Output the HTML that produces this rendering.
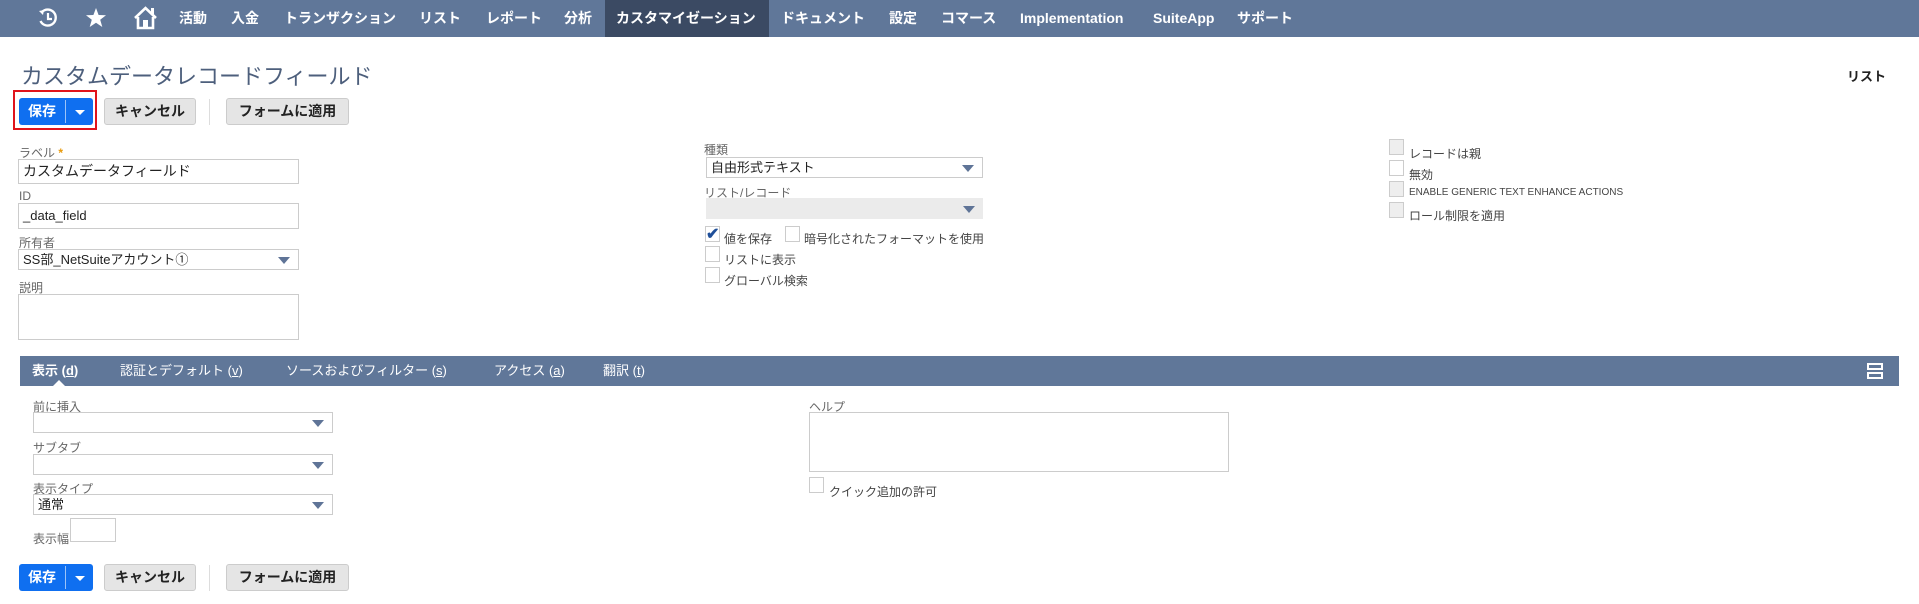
<!DOCTYPE html>
<html><head><meta charset="utf-8"><style>
*{box-sizing:border-box;margin:0;padding:0}
body{width:1919px;height:604px;background:#fff;position:relative;overflow:hidden;font-family:"Liberation Sans","Noto Sans CJK JP",sans-serif;color:#333}
.a{position:absolute;white-space:nowrap}
.nav{left:0;top:0;width:1919px;height:37px;background:#607799}
.ni{top:0;height:37px;line-height:37px;color:#fff;font-weight:bold;font-size:14px}
.lbl{font-size:12px;color:#666}
.inp{border:1px solid #ccc;background:#fff;font-size:13px;color:#222;padding-left:4px}
.arr{position:absolute;right:8px;top:50%;margin-top:-3px;width:0;height:0;border-left:6px solid transparent;border-right:6px solid transparent;border-top:7px solid #5f7497}
.cb{width:15px;height:16px;border:1px solid #ccc;background:#fff}
.cbg{background:#eee}
.btn{height:27px;border:1px solid #ccc;border-radius:3px;background:#e5e5e5;font-size:14px;font-weight:bold;line-height:25px;text-align:center;color:#222}
.save{height:27px;background:#0f6ff0;border-radius:3px;color:#fff;font-size:14px;font-weight:bold;line-height:27px}
.tab{top:356px;height:30px;line-height:30px;color:#fff;font-size:13px}
</style></head><body>
<div class="a nav"></div>
<div class="a" style="left:605px;top:0;width:164px;height:37px;background:#3b4a63"></div>
<svg class="a" style="left:37px;top:7px" width="22" height="22" viewBox="0 0 22 22"><path d="M5 5 A8 8 0 1 1 3.5 14" fill="none" stroke="#fff" stroke-width="2.4"/><path d="M2 4 L7 3 L6 8Z" fill="#fff"/><path d="M11 6 V12 H15" fill="none" stroke="#fff" stroke-width="2.2"/></svg>
<svg class="a" style="left:85px;top:7px" width="22" height="22" viewBox="0 0 22 22"><path d="M11 1 L13.6 8 L21 8.2 L15.2 12.8 L17.3 20 L11 15.8 L4.7 20 L6.8 12.8 L1 8.2 L8.4 8Z" fill="#fff"/></svg>
<svg class="a" style="left:133px;top:6px" width="25" height="24" viewBox="0 0 25 24"><path d="M2 12 L12.5 2 L23 12" fill="none" stroke="#fff" stroke-width="2.6"/><path d="M5 11 V22 H20 V11" fill="none" stroke="#fff" stroke-width="2.6"/><rect x="10" y="14" width="5" height="8" fill="#fff"/><rect x="18" y="2" width="3" height="6" fill="#fff"/></svg>
<div class="a ni" style="left:179px">活動</div>
<div class="a ni" style="left:231px">入金</div>
<div class="a ni" style="left:284px">トランザクション</div>
<div class="a ni" style="left:419px">リスト</div>
<div class="a ni" style="left:486px">レポート</div>
<div class="a ni" style="left:564px">分析</div>
<div class="a ni" style="left:616px">カスタマイゼーション</div>
<div class="a ni" style="left:781px">ドキュメント</div>
<div class="a ni" style="left:889px">設定</div>
<div class="a ni" style="left:941px">コマース</div>
<div class="a ni" style="left:1020px">Implementation</div>
<div class="a ni" style="left:1153px">SuiteApp</div>
<div class="a ni" style="left:1237px">サポート</div>

<div class="a" style="left:21px;top:59px;font-size:22px;color:#4d5f7c">カスタムデータレコードフィールド</div>
<div class="a" style="left:1847px;top:66px;font-size:13px;font-weight:bold;color:#222">リスト</div>

<div class="a" style="left:13px;top:90px;width:84px;height:40px;border:2px solid #e0141c"></div>
<div class="a save" style="left:19px;top:98px;width:74px"><span style="position:absolute;left:9px">保存</span><span style="position:absolute;left:46px;top:2px;bottom:2px;border-left:1px solid #9cc3f8"></span><span style="position:absolute;left:56px;top:12px;border-left:5px solid transparent;border-right:5px solid transparent;border-top:5px solid #fff"></span></div>
<div class="a btn" style="left:104px;top:98px;width:92px">キャンセル</div>
<div class="a" style="left:209px;top:99px;width:1px;height:26px;background:#ddd"></div>
<div class="a btn" style="left:226px;top:98px;width:123px">フォームに適用</div>

<div class="a lbl" style="left:19px;top:144px">ラベル <span style="color:#e89a0c;font-weight:bold">*</span></div>
<div class="a inp" style="left:18px;top:159px;width:281px;height:25px;line-height:23px;font-size:14px">カスタムデータフィールド</div>
<div class="a lbl" style="left:19px;top:189px">ID</div>
<div class="a inp" style="left:18px;top:203px;width:281px;height:26px;line-height:24px">_data_field</div>
<div class="a lbl" style="left:19px;top:234px">所有者</div>
<div class="a inp" style="left:18px;top:249px;width:281px;height:21px;line-height:19px">SS部_NetSuiteアカウント①<span class="arr"></span></div>
<div class="a lbl" style="left:19px;top:279px">説明</div>
<div class="a inp" style="left:18px;top:294px;width:281px;height:46px"></div>

<div class="a lbl" style="left:704px;top:141px">種類</div>
<div class="a inp" style="left:706px;top:157px;width:277px;height:21px;line-height:19px">自由形式テキスト<span class="arr"></span></div>
<div class="a lbl" style="left:704px;top:184px">リスト/レコード</div>
<div class="a" style="left:706px;top:198px;width:277px;height:21px;background:#ebebeb"><span class="arr"></span></div>
<div class="a cb" style="left:705px;top:226px"></div><div class="a" style="left:706px;top:224px;color:#1f4f99;font-size:16px;font-weight:bold">✔</div>
<div class="a lbl" style="left:724px;top:230px;color:#444">値を保存</div>
<div class="a cb" style="left:785px;top:226px"></div>
<div class="a lbl" style="left:804px;top:230px;color:#444">暗号化されたフォーマットを使用</div>
<div class="a cb" style="left:705px;top:246px"></div>
<div class="a lbl" style="left:724px;top:251px;color:#444">リストに表示</div>
<div class="a cb" style="left:705px;top:267px"></div>
<div class="a lbl" style="left:724px;top:272px;color:#444">グローバル検索</div>

<div class="a cb cbg" style="left:1389px;top:139px"></div><div class="a lbl" style="left:1409px;top:145px;color:#444">レコードは親</div>
<div class="a cb" style="left:1389px;top:160px"></div><div class="a lbl" style="left:1409px;top:166px;color:#444">無効</div>
<div class="a cb cbg" style="left:1389px;top:181px"></div><div class="a lbl" style="left:1409px;top:187px;color:#444;font-size:10px">ENABLE GENERIC TEXT ENHANCE ACTIONS</div>
<div class="a cb cbg" style="left:1389px;top:202px"></div><div class="a lbl" style="left:1409px;top:207px;color:#444">ロール制限を適用</div>

<div class="a" style="left:20px;top:356px;width:1879px;height:30px;background:#607799"></div>
<div class="a tab" style="left:32px;font-weight:bold">表示 (<u>d</u>)</div>
<div class="a" style="left:53px;top:380px;border-left:6px solid transparent;border-right:6px solid transparent;border-bottom:6px solid #fff"></div>
<div class="a tab" style="left:120px">認証とデフォルト (<u>v</u>)</div>
<div class="a tab" style="left:286px">ソースおよびフィルター (<u>s</u>)</div>
<div class="a tab" style="left:494px">アクセス (<u>a</u>)</div>
<div class="a tab" style="left:603px">翻訳 (<u>t</u>)</div>
<div class="a" style="left:1867px;top:363px;width:16px;height:7px;border:2px solid #fff"></div>
<div class="a" style="left:1867px;top:372px;width:16px;height:7px;border:2px solid #fff"></div>

<div class="a lbl" style="left:33px;top:398px">前に挿入</div>
<div class="a inp" style="left:33px;top:412px;width:300px;height:21px"><span class="arr"></span></div>
<div class="a lbl" style="left:33px;top:439px">サブタブ</div>
<div class="a inp" style="left:33px;top:454px;width:300px;height:21px"><span class="arr"></span></div>
<div class="a lbl" style="left:33px;top:480px">表示タイプ</div>
<div class="a inp" style="left:33px;top:494px;width:300px;height:21px;line-height:19px">通常<span class="arr"></span></div>
<div class="a lbl" style="left:33px;top:530px">表示幅</div>
<div class="a inp" style="left:70px;top:518px;width:46px;height:24px"></div>

<div class="a lbl" style="left:809px;top:398px">ヘルプ</div>
<div class="a inp" style="left:809px;top:412px;width:420px;height:60px"></div>
<div class="a cb" style="left:809px;top:477px"></div>
<div class="a lbl" style="left:829px;top:483px;color:#444">クイック追加の許可</div>

<div class="a save" style="left:19px;top:564px;width:74px"><span style="position:absolute;left:9px">保存</span><span style="position:absolute;left:46px;top:2px;bottom:2px;border-left:1px solid #9cc3f8"></span><span style="position:absolute;left:56px;top:12px;border-left:5px solid transparent;border-right:5px solid transparent;border-top:5px solid #fff"></span></div>
<div class="a btn" style="left:104px;top:564px;width:92px">キャンセル</div>
<div class="a" style="left:209px;top:565px;width:1px;height:26px;background:#ddd"></div>
<div class="a btn" style="left:226px;top:564px;width:123px">フォームに適用</div>
</body></html>
